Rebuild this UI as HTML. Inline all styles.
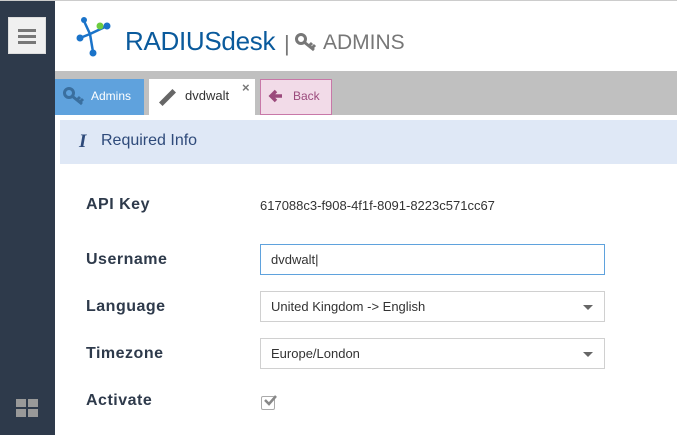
<!DOCTYPE html>
<html><head><style>
body{margin:0;width:677px;height:435px;overflow:hidden;font-family:"Liberation Sans",sans-serif;background:#fff;position:relative}
.a{position:absolute}
.lbl{position:absolute;left:86px;font-weight:bold;font-size:16px;color:#2e3a4b;letter-spacing:.5px}
.inp{position:absolute;left:260px;font-size:13px;color:#333;line-height:29px;padding-left:10px;box-sizing:border-box;width:345px;height:31px;border:1px solid #d0d0d0}
.arr{position:absolute;right:11px;top:13px;border-left:5px solid transparent;border-right:5px solid transparent;border-top:5px solid #666}
</style></head><body>
<div class="a" style="left:0;top:0;width:677px;height:1px;background:#ccc"></div>
<div class="a" style="left:0;top:1px;width:55px;height:434px;background:#2e3a4b"></div>
<div class="a" style="left:8px;top:17px;width:38px;height:37px;background:#f0f0f0;border:1px solid #ddd;box-sizing:border-box"></div>
<div class="a" style="left:18px;top:29px;width:18px;height:3px;background:#777;box-shadow:0 6px 0 #777,0 12px 0 #777"></div>
<div class="a" style="left:16px;top:399px;width:10px;height:8px;background:#999;box-shadow:12px 0 0 #999,0 10px 0 #999,12px 10px 0 #999"></div>
<svg class="a" style="left:76px;top:16px" width="40" height="42" viewBox="0 0 40 42"><g stroke="#1a73c9" stroke-width="2.5" fill="none"><line x1="8" y1="5" x2="14" y2="18"/><line x1="14" y1="18" x2="31" y2="10"/><line x1="4" y1="22" x2="14" y2="18"/><line x1="14" y1="18" x2="17" y2="36"/></g><g fill="#1a73c9"><circle cx="8" cy="4" r="3"/><circle cx="4" cy="22" r="3.5"/><circle cx="31" cy="10" r="3.5"/><circle cx="17" cy="37" r="3.5"/></g><circle cx="24" cy="10" r="3.5" fill="#6dcc3f"/></svg>
<div class="a" style="left:125px;top:26px;font-size:26px;color:#0a5a9c;letter-spacing:-0.3px">RADIUSdesk</div>
<div class="a" style="left:284px;top:31px;font-size:22px;color:#777">|</div>
<svg class="a" style="left:295px;top:32px" width="22" height="20" viewBox="0 0 22 20"><circle cx="6" cy="7" r="4.5" fill="none" stroke="#777" stroke-width="3"/><path d="M9 10 L19 18 M14 14 L17 11 M17 16 L20 13" stroke="#777" stroke-width="3" fill="none"/></svg>
<div class="a" style="left:323px;top:31px;font-size:21px;color:#777">ADMINS</div>
<div class="a" style="left:55px;top:71px;width:622px;height:44px;background:#c0c0c0"></div>
<div class="a" style="left:55px;top:79px;width:89px;height:36px;background:#5fa2dd;color:#fff;font-size:12px;line-height:34px;padding-left:36px;box-sizing:border-box">Admins</div>
<svg class="a" style="left:63px;top:86px" width="22" height="20" viewBox="0 0 22 20"><circle cx="6" cy="7" r="4.5" fill="none" stroke="#3a6f9f" stroke-width="3"/><path d="M9 10 L19 18 M14 14 L17 11 M17 16 L20 13" stroke="#3a6f9f" stroke-width="3" fill="none"/></svg>
<div class="a" style="left:149px;top:79px;width:106px;height:36px;background:#fff;font-size:13px;color:#333;line-height:34px;padding-left:36px;box-sizing:border-box">dvdwalt</div>
<div class="a" style="left:158px;top:95px;width:19px;height:5px;background:#666;transform:rotate(-45deg)"></div>
<div class="a" style="left:242px;top:80px;font-size:13px;color:#777;font-weight:bold">×</div>
<div class="a" style="left:260px;top:79px;width:72px;height:36px;background:#f2dbe8;border:1px solid #c878a8;box-sizing:border-box;font-size:12px;color:#9b4a7c;line-height:33px;padding-left:32px">Back</div>
<svg class="a" style="left:268px;top:89px" width="16" height="14" viewBox="0 0 16 14"><path d="M14 7 H4 M8 2 L3 7 L8 12" stroke="#9b4a7c" stroke-width="3.5" fill="none"/></svg>
<div class="a" style="left:60px;top:120px;width:617px;height:44px;background:#dfe8f6"></div>
<div class="a" style="left:79px;top:131px;font-family:'Liberation Serif',serif;font-style:italic;font-weight:bold;font-size:19px;color:#2e4a7a">I</div>
<div class="a" style="left:101px;top:132px;font-size:16px;color:#2e4a7a">Required Info</div>
<div class="lbl" style="top:196px">API Key</div>
<div class="a" style="left:260px;top:198px;font-size:13px;color:#333">617088c3-f908-4f1f-8091-8223c571cc67</div>
<div class="lbl" style="top:251px">Username</div>
<div class="inp" style="top:244px;border-color:#5fa2dd">dvdwalt|</div>
<div class="lbl" style="top:298px">Language</div>
<div class="inp" style="top:291px">United Kingdom -&gt; English<div class="arr"></div></div>
<div class="lbl" style="top:345px">Timezone</div>
<div class="inp" style="top:338px">Europe/London<div class="arr"></div></div>
<div class="lbl" style="top:392px">Activate</div>
<div class="a" style="left:261px;top:396px;width:12px;height:12px;border:1.5px solid #aaa;border-radius:2px"></div>
<svg class="a" style="left:262px;top:393px" width="16" height="14" viewBox="0 0 16 14"><path d="M3 7 L7 11 L14 3" stroke="#888" stroke-width="2.5" fill="none"/></svg>
</body></html>
